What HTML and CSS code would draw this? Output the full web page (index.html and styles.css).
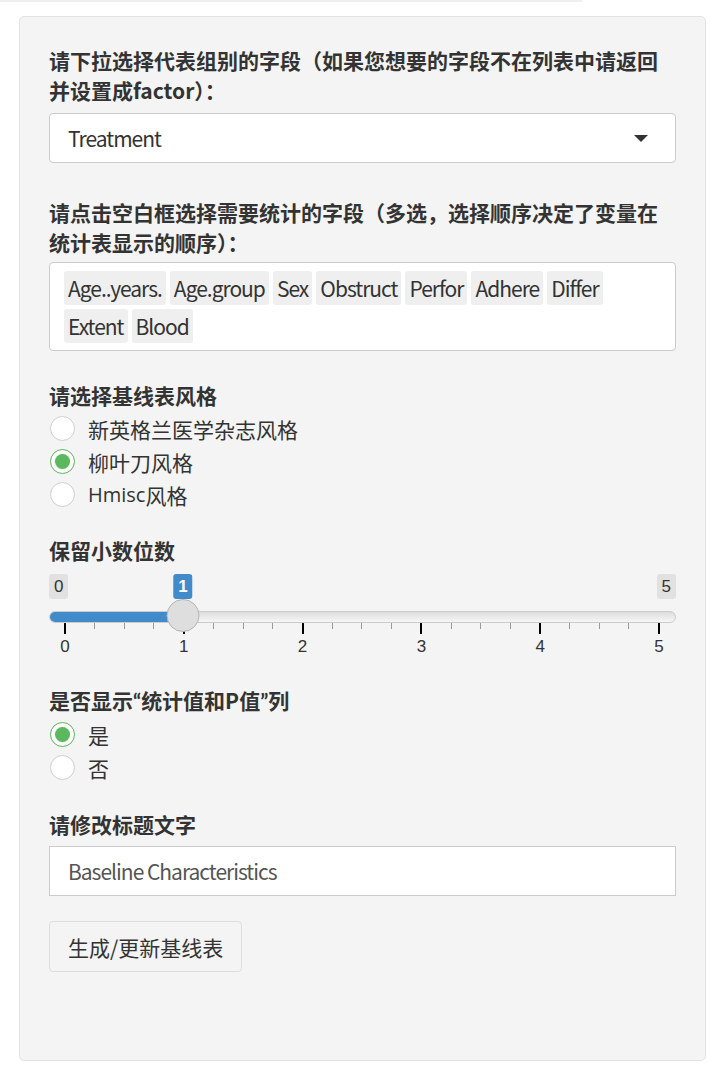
FILE: index.html
```html
<!DOCTYPE html>
<html>
<head>
<meta charset="utf-8">
<title>基线表</title>
<link rel="stylesheet" href="styles.css">
</head>
<body>
<div class="topline"></div>
<div class="well">

  <div class="group">
    <label class="ctl-label">请下拉选择代表组别的字段（如果您想要的字段不在列表中请返回并设置成factor）：</label>
    <div class="select">
      <span class="lat">Treatment</span>
      <i class="caret"></i>
    </div>
  </div>

  <div class="group g-multi">
    <label class="ctl-label">请点击空白框选择需要统计的字段（多选，选择顺序决定了变量在统计表显示的顺序）：</label>
    <div class="multi">
      <span class="tag">Age..years.</span>
      <span class="tag">Age.group</span>
      <span class="tag">Sex</span>
      <span class="tag">Obstruct</span>
      <span class="tag">Perfor</span>
      <span class="tag">Adhere</span>
      <span class="tag">Differ</span>
      <span class="tag">Extent</span>
      <span class="tag">Blood</span>
    </div>
  </div>

  <div class="group g-style">
    <label class="ctl-label">请选择基线表风格</label>
    <div class="radio"><span class="dot"></span>新英格兰医学杂志风格</div>
    <div class="radio checked"><span class="dot"></span>柳叶刀风格</div>
    <div class="radio"><span class="dot"></span><span class="rlat">Hmisc</span>风格</div>
  </div>

  <div class="group g-slider">
    <label class="ctl-label">保留小数位数</label>
    <div class="irs">
      <div class="irs-labels"><span class="irs-badge">0</span><span class="irs-badge">5</span></div>
      <div class="irs-line"><div class="irs-bar" style="width: 21.4%"></div></div>
      <div class="irs-grid">
        <i class="major"></i><i></i><i></i><i></i>
        <i class="major"></i><i></i><i></i><i></i>
        <i class="major"></i><i></i><i></i><i></i>
        <i class="major"></i><i></i><i></i><i></i>
        <i class="major"></i><i></i><i></i><i></i>
        <i class="major"></i>
      </div>
      <div class="irs-nums"><span>0</span><span>1</span><span>2</span><span>3</span><span>4</span><span>5</span></div>
      <div class="irs-rail">
        <span class="irs-single" style="left: 20%">1</span>
        <span class="irs-handle" style="left: 20%"></span>
      </div>
    </div>
  </div>

  <div class="group g-pval">
    <label class="ctl-label">是否显示<span class="q">“</span>统计值和P值<span class="q">”</span>列</label>
    <div class="radio checked"><span class="dot"></span>是</div>
    <div class="radio"><span class="dot"></span>否</div>
  </div>

  <div class="group g-title">
    <label class="ctl-label">请修改标题文字</label>
    <div class="text-input lat">Baseline Characteristics</div>
  </div>

  <button class="btn">生成/更新基线表</button>

</div>
</body>
</html>
```

FILE: styles.css
```css
body {
  margin: 0;
  background: #ffffff;
  color: #333333;
  font-family: "Noto Sans CJK SC", sans-serif;
  font-size: 21px;
  line-height: 30px;
}
.lat {
  letter-spacing: -1px;
}
.q {
  font-family: "Lato", sans-serif;
}
.rlat {
  font-family: "Open Sans", sans-serif;
  font-size: 20px;
}
.topline {
  width: 582px;
  height: 2px;
  background: #efefef;
}
.well {
  margin: 14px 0 0 19px;
  width: 627px;
  height: 1015px;
  padding: 28px 29px 0 29px;
  background: #f4f4f4;
  border: 1px solid #e3e3e3;
  border-radius: 5px;
}
.ctl-label {
  display: block;
  font-weight: bold;
  margin-bottom: 8px;
}
.group {
  margin-bottom: 24px;
}

/* select */
.select {
  display: flex;
  align-items: center;
  justify-content: space-between;
  height: 48px;
  padding: 0 27px 0 18px;
  background: #ffffff;
  border: 1px solid #cccccc;
  border-radius: 4px;
}
.caret {
  width: 0;
  height: 0;
  border-left: 7.5px solid transparent;
  border-right: 7.5px solid transparent;
  border-top: 7.5px solid #333333;
}

/* multi select */
.g-multi {
  margin-top: 34px;
  margin-bottom: 29px;
}
.g-multi .ctl-label {
  margin-bottom: 5px;
}
.multi {
  display: flex;
  flex-wrap: wrap;
  gap: 4px 4px;
  padding: 8px 14px 7px 14px;
  background: #ffffff;
  border: 1px solid #cccccc;
  border-radius: 4px;
}
.tag {
  padding: 0 4px;
  height: 34px;
  line-height: 34px;
  background: #efefef;
  border-radius: 3px;
  letter-spacing: -1px;
}

/* radio */
.g-style .ctl-label,
.g-pval .ctl-label {
  margin-bottom: 2px;
}
.radio {
  display: flex;
  align-items: center;
  height: 33px;
}
.dot {
  width: 23px;
  height: 23px;
  margin: 0 13px 0 1px;
  border: 1px solid #cfcfcf;
  border-radius: 50%;
  background: #ffffff;
  box-sizing: content-box;
}
.radio.checked .dot {
  width: 15px;
  height: 15px;
  border: 1px solid #5cb85c;
  background: #5cb85c;
  box-shadow: inset 0 0 0 3px #ffffff;
  padding: 4px;
  background-clip: content-box;
}

/* slider */
.g-slider {
  margin-bottom: 28px;
}
.g-slider .ctl-label {
  margin-bottom: 9px;
}
.irs {
  position: relative;
  font-family: "Liberation Sans", Arial, sans-serif;
  font-size: 17px;
  line-height: 25px;
}
.irs-labels {
  display: flex;
  justify-content: space-between;
  height: 25px;
}
.irs-badge {
  padding: 0 5px;
  background: #e1e1e1;
  border-radius: 3px;
}
.irs-line {
  margin-top: 12px;
  height: 10px;
  background: linear-gradient(#dddddd, #f6f6f6);
  border: 1px solid #cccccc;
  border-radius: 6px;
  overflow: hidden;
}
.irs-bar {
  height: 100%;
  background: #428bca;
}
.irs-grid {
  display: flex;
  justify-content: space-between;
  margin: 0 16px 0 15px;
  height: 11px;
}
.irs-grid i {
  width: 1px;
  height: 6px;
  background: #9a9a9a;
}
.irs-grid i.major {
  width: 2px;
  height: 11px;
  background: #000000;
}
.irs-nums {
  display: flex;
  justify-content: space-between;
  margin: 3px 17px 0 16px;
  font-size: 17px;
  line-height: 20px;
}
.irs-nums span {
  width: 0;
  display: flex;
  justify-content: center;
}
.irs-rail {
  position: absolute;
  top: 0;
  left: 15px;
  right: 17px;
  height: 60px;
}
.irs-single {
  position: absolute;
  top: 0;
  transform: translateX(-50%);
  padding: 0 5px;
  background: #428bca;
  color: #ffffff;
  border-radius: 3px;
  font-weight: bold;
}
.irs-handle {
  position: absolute;
  top: 25px;
  width: 31px;
  height: 31px;
  transform: translateX(-50%);
  background: #dedede;
  border: 1px solid #b4b4b4;
  border-radius: 50%;
}

/* text input */
.g-pval {
  margin-bottom: 25px;
}
.g-title {
  margin-bottom: 25px;
}
.g-title .ctl-label {
  margin-bottom: 7px;
}
.text-input {
  height: 48px;
  line-height: 48px;
  padding-left: 18px;
  background: #ffffff;
  border: 1px solid #cccccc;
  color: #555555;
}

.btn {
  height: 51px;
  padding: 0 18px;
  font-family: "Noto Sans CJK SC", sans-serif;
  font-size: 21px;
  color: #333333;
  background: #f4f4f4;
  border: 1px solid #dddddd;
  border-radius: 4px;
}
```
